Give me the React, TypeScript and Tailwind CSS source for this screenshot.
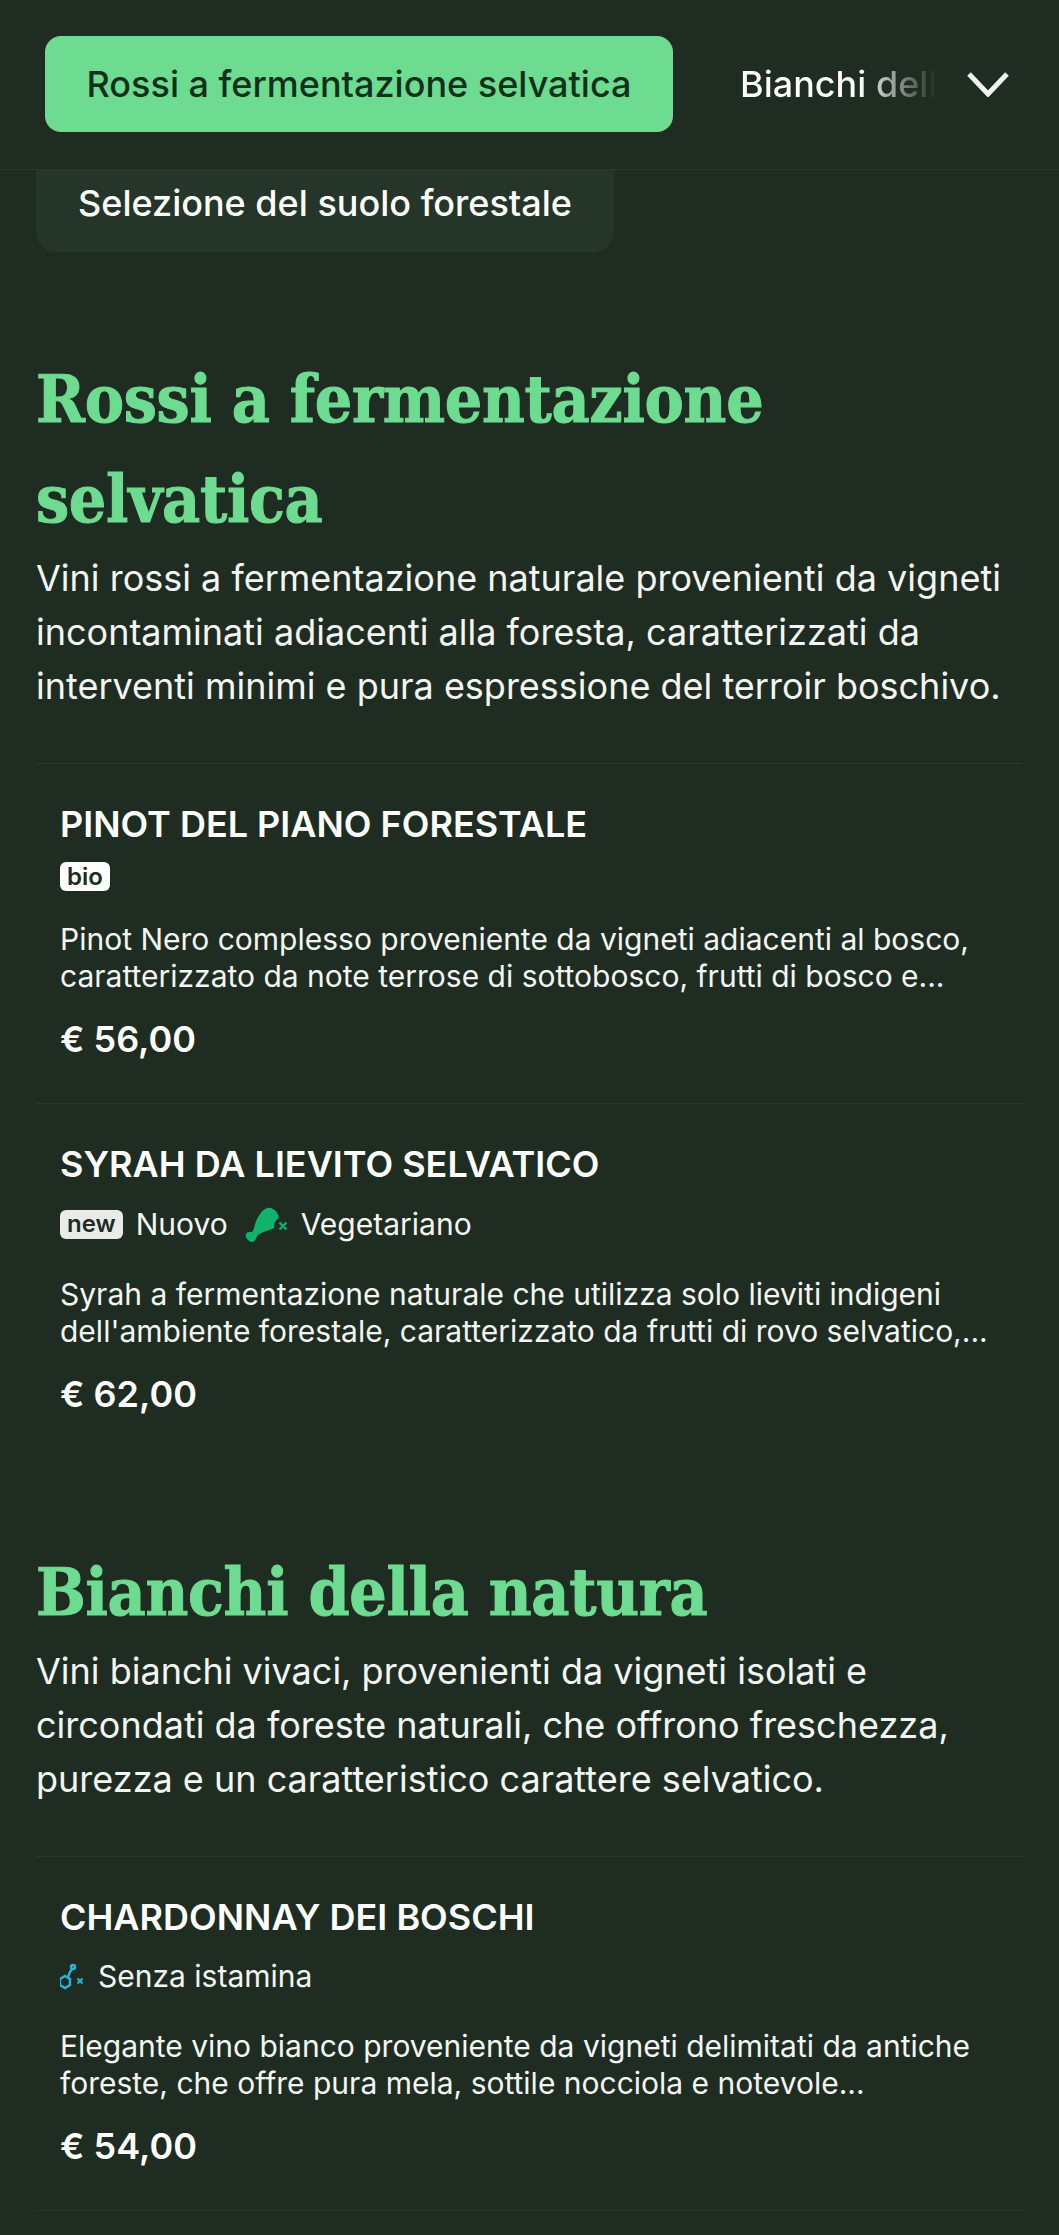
import type { ReactNode } from "react";

const HEADING =
  "font-['DejaVu_Serif_Condensed','DejaVu_Serif',serif] text-[65.5px] leading-[100px] font-bold tracking-[-0.3px] text-[#6edc90] [-webkit-text-stroke:1px_#6edc90]";

function Drumstick() {
  return (
    <svg viewBox="5 3 47 44" className="h-[44px] w-[47px] shrink-0">
      <path
        d="M10 38C9 35 11 33 13 33C15 33 16 33 17 32C19 26 20 20 24 15C27 10 33 7 37 10C41 12 44 17 42 22C41 26 40 29 36 30C31 32 26 33 22 36C20 38 20 43 16 43C14 43 11 41 10 38Z"
        fill="#10b26c"
      />
      <circle cx="47" cy="27" r="9" fill="#1f2c22" />
      <path d="M43.5 23.5l7 7M50.5 23.5l-7 7" stroke="#10b26c" strokeWidth="2.4" />
    </svg>
  );
}

function Molecule() {
  return (
    <svg viewBox="10 6 25 30" fill="none" stroke="#29b6d6" strokeWidth="2.4" className="h-[30px] w-[25px] shrink-0">
      <path d="M15 20l5 3v6l-5 3-5-3v-6z" />
      <path d="M18 21l2-5 2-3" />
      <circle cx="23" cy="11" r="2" />
      <path d="M27.5 22.5l5 5M32.5 22.5l-5 5" strokeWidth="2" />
    </svg>
  );
}

function Badge({ label, light }: { label: string; light?: boolean }) {
  return (
    <span
      className={
        "flex h-[29px] items-center rounded-[6px] px-[7px] text-[24px] font-semibold leading-none text-[#1f2c22] " +
        (light ? "bg-[#e8ebe8]" : "bg-white")
      }
    >
      {label}
    </span>
  );
}

function Item({
  name,
  tags,
  desc,
  price,
}: {
  name: string;
  tags: ReactNode;
  desc: string[];
  price: string;
}) {
  return (
    <div className="border-t border-[#2b382e] px-[24px] pt-[35px] pb-[39px]">
      <h3 className="text-[36px] leading-[50px] font-semibold text-white">{name}</h3>
      <div className="mt-[13px] flex items-center gap-[13px] text-[30px] leading-[43px] text-[#f3f5f3]">{tags}</div>
      <p className="mt-[30px] text-[30px] leading-[37px] text-[#f3f5f3]">
        {desc.map((line) => (
          <span key={line} className="block whitespace-nowrap">
            {line}
          </span>
        ))}
      </p>
      <div className="mt-[19px] text-[36px] leading-[50px] font-semibold text-white">{price}</div>
    </div>
  );
}

export default function App() {
  return (
    <div className="h-[2235px] w-[1059px] overflow-hidden bg-[#1f2c22] font-['Inter',sans-serif]">
      <header className="flex h-[170px] items-center border-b border-[#2b382e] pb-[2px] pl-[45px]">
        <div className="flex h-[96px] w-[628px] shrink-0 items-center justify-center rounded-[16px] bg-[#6edc90] text-[36px] font-medium text-[#14301d]">
          Rossi a fermentazione selvatica
        </div>
        <div className="ml-[67px] w-[197px] overflow-hidden whitespace-nowrap bg-gradient-to-r from-white from-60% to-transparent bg-clip-text text-[36px] font-medium text-transparent">
          Bianchi della natura
        </div>
        <svg viewBox="0 0 42 26" fill="none" stroke="#f0f2f0" strokeWidth="5" className="ml-[30px] h-[26px] w-[42px]">
          <path d="M2 3l19 20L40 3" />
        </svg>
      </header>

      <div className="ml-[36px] flex h-[82px] w-[578px] items-center rounded-b-[20px] bg-[#263529] pb-[16px] pl-[42px] text-[36px] font-medium text-white">
        Selezione del suolo forestale
      </div>

      <main className="px-[36px]">
        <section className="mt-[97px]">
          <h2 className={HEADING}>
            Rossi a fermentazione
            <br />
            selvatica
          </h2>
          <p className="mt-[2px] text-[36px] leading-[54px] whitespace-nowrap text-[#f3f5f3]">
            Vini rossi a fermentazione naturale provenienti da vigneti
            <br />
            incontaminati adiacenti alla foresta, caratterizzati da
            <br />
            interventi minimi e pura espressione del terroir boschivo.
          </p>
          <div className="mt-[50px]">
            <Item
              name="PINOT DEL PIANO FORESTALE"
              tags={<Badge label="bio" />}
              desc={[
                "Pinot Nero complesso proveniente da vigneti adiacenti al bosco,",
                "caratterizzato da note terrose di sottobosco, frutti di bosco e...",
              ]}
              price="€ 56,00"
            />
            <Item
              name="SYRAH DA LIEVITO SELVATICO"
              tags={
                <>
                  <Badge label="new" light />
                  <span>Nuovo</span>
                  <Drumstick />
                  <span>Vegetariano</span>
                </>
              }
              desc={[
                "Syrah a fermentazione naturale che utilizza solo lieviti indigeni",
                "dell'ambiente forestale, caratterizzato da frutti di rovo selvatico,...",
              ]}
              price="€ 62,00"
            />
          </div>
        </section>

        <section className="mt-[84px]">
          <h2 className={HEADING}>Bianchi della natura</h2>
          <p className="mt-[2px] text-[36px] leading-[54px] whitespace-nowrap text-[#f3f5f3]">
            Vini bianchi vivaci, provenienti da vigneti isolati e
            <br />
            circondati da foreste naturali, che offrono freschezza,
            <br />
            purezza e un caratteristico carattere selvatico.
          </p>
          <div className="mt-[50px]">
            <Item
              name="CHARDONNAY DEI BOSCHI"
              tags={
                <>
                  <Molecule />
                  <span>Senza istamina</span>
                </>
              }
              desc={[
                "Elegante vino bianco proveniente da vigneti delimitati da antiche",
                "foreste, che offre pura mela, sottile nocciola e notevole...",
              ]}
              price="€ 54,00"
            />
            <div className="border-t border-[#2b382e]" />
          </div>
        </section>
      </main>
    </div>
  );
}
